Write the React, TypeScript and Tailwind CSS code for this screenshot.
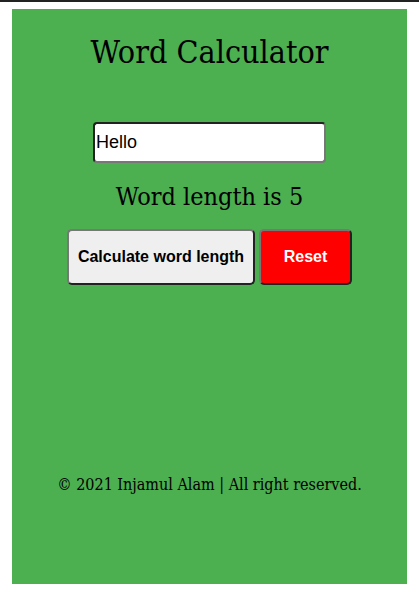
import { useState } from "react";

export default function App() {
  const [word, setWord] = useState("Hello");
  const [len, setLen] = useState(5);

  return (
    <div className="min-h-[597px] bg-white">
      <div className="h-[2px] bg-[#222]" />
      <div className="mx-3 mt-[7px] h-[575px] bg-[#4caf50] flex flex-col items-center font-['DejaVu_Serif_Condensed','DejaVu_Serif',serif] text-black">
        {/* title */}
        <h1 className="mt-[23px] text-[32px] leading-[40px]">Word Calculator</h1>

        <input
          value={word}
          onChange={(e) => setWord(e.target.value)}
          className="mt-[50px] w-[233px] h-[41px] bg-white rounded-[4px] border-2 border-t-[#222] border-l-[#222] border-b-[#777] border-r-[#777] px-[1px] text-[18px] font-['Liberation_Sans',sans-serif] outline-none"
        />

        <p className="mt-[18px] text-[25px] leading-[32px]">Word length is {len}</p>

        <div className="mt-[16px] flex gap-[4px] font-['Liberation_Sans',sans-serif] font-bold text-[16px]">
          <button
            onClick={() => setLen(word.length)}
            className="w-[188px] h-[56px] bg-[#efefef] rounded-[5px] border-2 border-t-[#777] border-l-[#777] border-b-[#222] border-r-[#222]"
          >
            Calculate word length
          </button>
          <button
            onClick={() => {
              setWord("");
              setLen(0);
            }}
            className="w-[93px] h-[56px] bg-[#ff0000] text-white rounded-[5px] border-2 border-t-[#777] border-l-[#777] border-b-[#222] border-r-[#222]"
          >
            Reset
          </button>
        </div>

        <footer className="mt-[189px] text-[16px] leading-[22px]">© 2021 Injamul Alam | All right reserved.</footer>
      </div>
    </div>
  );
}
